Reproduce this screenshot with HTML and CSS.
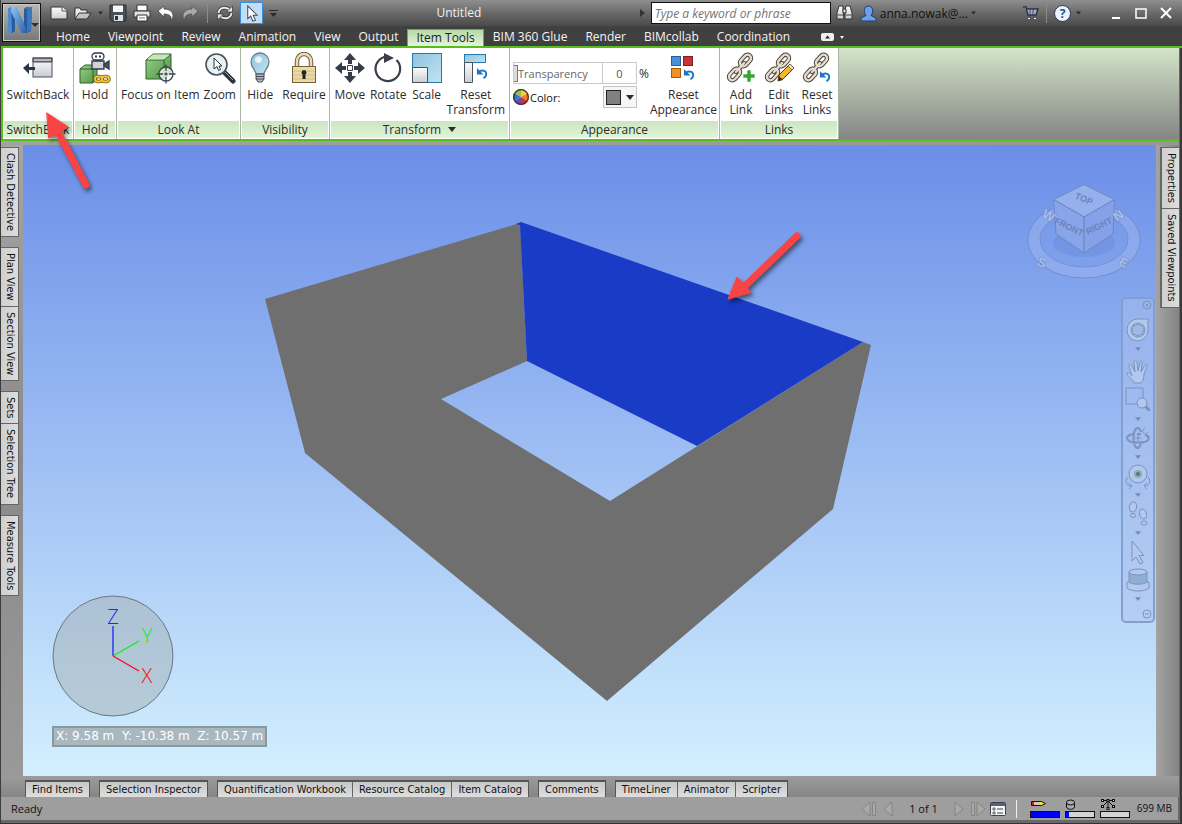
FILE: index.html
```html
<!DOCTYPE html>
<html lang="en">
<head>
<meta charset="utf-8">
<title>Untitled</title>
<link rel="stylesheet" href="styles.css">
</head>
<body>
<svg class="defs" width="0" height="0" aria-hidden="true">
  <defs>
    <linearGradient id="gGreen" x1="0" y1="0" x2="1" y2="1"><stop offset="0" stop-color="#9ccf8c"/><stop offset="1" stop-color="#4d9440"/></linearGradient>
    <linearGradient id="gBlue" x1="0" y1="0" x2="1" y2="1"><stop offset="0" stop-color="#8fc3de"/><stop offset="1" stop-color="#c2e3f2"/></linearGradient>
    <linearGradient id="gSilver" x1="0" y1="0" x2="0" y2="1"><stop offset="0" stop-color="#fdfdfd"/><stop offset="1" stop-color="#c9ccd3"/></linearGradient>
    <linearGradient id="gLogo" x1="0" y1="0" x2="1" y2="1"><stop offset="0" stop-color="#8cc4f0"/><stop offset="1" stop-color="#2c66ad"/></linearGradient>
    <symbol id="caret" viewBox="0 0 8 5"><path d="M0 0h8L4 5z" fill="currentColor"/></symbol>
    <symbol id="chain" viewBox="0 0 32 32">
      <g fill="none" stroke-linecap="round">
        <g stroke="#4a443c" stroke-width="4.400"><rect x="14" y="5" width="13" height="7" rx="3.500" transform="rotate(-48 20.500 8.500)"/><rect x="3" y="19" width="13" height="7" rx="3.500" transform="rotate(-48 9.500 22.500)"/><path d="M11 20l8-9"/></g>
        <g stroke="#e6dccb" stroke-width="2.400"><rect x="14" y="5" width="13" height="7" rx="3.500" transform="rotate(-48 20.500 8.500)"/><rect x="3" y="19" width="13" height="7" rx="3.500" transform="rotate(-48 9.500 22.500)"/><path d="M11 20l8-9"/></g>
      </g>
    </symbol>
    <symbol id="undoBlue" viewBox="0 0 14 14"><path d="M2.500 5.500C6 2.500 11 3.500 11 7.500c0 2-1 3.500-3 4.500" fill="none" stroke="#1b74c8" stroke-width="2"/><path d="M1 1v7h7z" fill="#1b74c8"/></symbol>
    <symbol id="pointer" viewBox="0 0 14 20"><path d="M2 1v15l3.500-3 2.500 6 3-1.200-2.600-5.800H13z" fill="#fff" stroke="#3c4654" stroke-width="1.200"/></symbol>
  </defs>
</svg>

<div class="app">
  <header class="chrome">
    <button class="app-menu" aria-label="Application menu">
      <svg width="38" height="38" viewBox="0 0 38 38"><path d="M5 5l3-2h5l8 17V5l2-2h6l-1 24-4 2h-5l-7-14v12l-3 2H5z" fill="#2a5c9d"/><path d="M8 3h5l10 22v4h-4L8 8z" fill="url(#gLogo)"/><path d="M5 5l3-2 1 24-1 2H5z" fill="#4b8dcb"/><path d="M23 3h6l-1 22-4 4V6z" fill="#3a78bd"/><path d="M28 19h8l-4 4z" fill="#2e2e2e"/></svg>
    </button>
    <div class="titlebar">
      <div class="quick">
        <button class="tool" aria-label="New"><svg width="18" height="16" viewBox="0 0 18 16"><path d="M1 2h11l5 4v8H1z" fill="url(#gSilver)" stroke="#333"/><path d="M12 2v4h5" fill="#fff" stroke="#555"/></svg></button>
        <button class="tool" aria-label="Open"><svg width="18" height="16" viewBox="0 0 18 16"><path d="M1 14V3h5l1 2h6v3" fill="#eee" stroke="#333"/><path d="M1 14l4-6h12l-4 6z" fill="#bfc4ca" stroke="#333"/></svg></button>
        <svg class="tiny" width="5" height="4"><use href="#caret"/></svg>
        <button class="tool" aria-label="Save"><svg width="18" height="18" viewBox="0 0 18 18"><path d="M1 1h16v16H3l-2-2z" fill="#4b5058" stroke="#2b2b2b"/><path d="M4 1.500h10V8H4z" fill="#f7f7f7"/><path d="M5 11h9v6H5z" fill="#dde3ea"/><path d="M6 12h3v4H6z" fill="#333"/></svg></button>
        <button class="tool" aria-label="Print"><svg width="18" height="18" viewBox="0 0 18 18"><path d="M4 1h10v6H4z" fill="#fff" stroke="#333"/><path d="M1 7h16v6H1z" fill="#e4e4e4" stroke="#333"/><path d="M4 11h10v6H4z" fill="#fff" stroke="#333"/><path d="M6 14h6" stroke="#777"/></svg></button>
        <button class="tool" aria-label="Undo"><svg width="18" height="16" viewBox="0 0 18 16"><path d="M1 6l6-5v3c6 0 9 3 9 7 0 2-1 3-2 4 1-4-2-6-7-6v3z" fill="#fff" stroke="#444" stroke-width=".8"/></svg></button>
        <button class="tool" aria-label="Redo"><svg width="18" height="16" viewBox="0 0 18 16"><path d="M17 6l-6-5v3C5 4 2 7 2 11c0 2 1 3 2 4-1-4 2-6 7-6v3z" fill="#a9a9a9" stroke="#555" stroke-width=".8"/></svg></button>
        <span class="rule"></span>
        <button class="tool" aria-label="Refresh"><svg width="18" height="16" viewBox="0 0 18 16"><g fill="none" stroke="#2f2f2f" stroke-width="3.400"><path d="M2.500 8C3 3 9 1 13.500 4.500M15.500 8C15 13 9 15 4.500 11.500"/></g><g fill="none" stroke="#e8e8e8" stroke-width="2"><path d="M2.500 8C3 3 9 1 13.500 4.500M15.500 8C15 13 9 15 4.500 11.500"/></g><path d="M16.500 1v6h-6zM1.500 15V9h6z" fill="#e8e8e8" stroke="#2f2f2f" stroke-width=".7"/></svg></button>
        <button class="tool tool-on" aria-label="Select" aria-pressed="true"><svg width="12" height="17"><use href="#pointer"/></svg></button>
        <svg class="tiny" width="9" height="7" viewBox="0 0 9 7"><path d="M0 0h9v1H0zM1 3h7L4.500 7z" fill="currentColor"/></svg>
      </div>
      <h1 class="doc-title">Untitled</h1>
      <div class="account">
        <svg class="tiny" width="5" height="8"><path d="M0 0l5 4-5 4z" fill="#333"/></svg>
        <input class="search" type="search" placeholder="Type a keyword or phrase" aria-label="Search">
        <button class="tool" aria-label="Find"><svg width="17" height="16" viewBox="0 0 17 16"><g fill="url(#gSilver)" stroke="#333"><path d="M3 1h4v4l1 9H1V8zM10 1h4l2 7v6H9V5z"/><path d="M7 4h3v4H7z"/></g><path d="M1.500 10h6M9.500 10h6" stroke="#444"/></svg></button>
        <button class="user"><svg width="17" height="17" viewBox="0 0 17 17"><path d="M1 16v-3l5-2.500C3 7 4 1 8.500 1S14 7 11 10.500l5 2.500v3z" fill="#6f9fe8" stroke="#1d3d78"/></svg><span>anna.nowak@...</span><svg class="tiny" width="5" height="4"><use href="#caret"/></svg></button>
        <button class="tool cart" aria-label="Store"><svg width="17" height="16" viewBox="0 0 17 16"><path d="M1 2h3l2 8h8l2-6H5" fill="#e8ecf4" stroke="#25304f" stroke-width="1.400"/><path d="M6 6h9M6 8h8M8 4v6M11 4v6" stroke="#25304f" stroke-width=".7"/><circle cx="7" cy="13.500" r="1.500" fill="#fff" stroke="#25304f"/><circle cx="13" cy="13.500" r="1.500" fill="#fff" stroke="#25304f"/></svg></button>
        <span class="rule"></span>
        <button class="help" aria-label="Help">?</button>
        <svg class="tiny" width="5" height="4"><use href="#caret"/></svg>
        <div class="window-buttons">
          <button aria-label="Minimize"><svg width="14" height="14"><path d="M3 11h8v2H3z" fill="#fff"/></svg></button>
          <button aria-label="Maximize"><svg width="14" height="14"><path d="M2 3h10v9H2z" fill="none" stroke="#fff" stroke-width="1.500"/></svg></button>
          <button aria-label="Close"><svg width="14" height="14"><path d="M2 2l10 10M12 2L2 12" stroke="#fff" stroke-width="2"/></svg></button>
        </div>
      </div>
    </div>
    <nav class="tabs" aria-label="Ribbon tabs">
      <button>Home</button><button>Viewpoint</button><button>Review</button><button>Animation</button><button>View</button><button>Output</button><button class="active">Item Tools</button><button>BIM 360 Glue</button><button>Render</button><button>BIMcollab</button><button>Coordination</button>
      <button class="minimize" aria-label="Minimize ribbon"><svg width="24" height="8" viewBox="0 0 24 8"><rect width="13" height="8" rx="2" fill="#eee"/><path d="M4 5.500h5L6.500 2.500z" fill="#222"/><path d="M19 3h4l-2 3z" fill="#eee"/></svg></button>
    </nav>
  </header>

  <section class="ribbon" aria-label="Item Tools">
    <div class="panel w-switch">
      <div class="cmds"><button class="cmd"><svg width="32" height="32" viewBox="0 0 32 32"><rect x="11" y="6" width="19" height="19" fill="url(#gSilver)" stroke="#4a4f5a"/><path d="M11 6h19v4H11z" fill="#70747e" stroke="#4a4f5a"/><path d="M12 8h17" stroke="#fff"/><path d="M1 16l6-5v4h6v3H7v4z" fill="#2b3444"/></svg><span>SwitchBack</span></button></div>
      <h2>SwitchBack</h2>
    </div>
    <div class="panel w-hold">
      <div class="cmds"><button class="cmd"><svg width="32" height="32" viewBox="0 0 32 32"><path d="M1 17l5-4h12v14l-4 4H1z" fill="url(#gGreen)" stroke="#2c6327"/><path d="M1 17h13v14M14 17l4-4" fill="none" stroke="#2c6327"/><g fill="#fff" stroke="#2f3847" stroke-width="1.300"><rect x="13" y="1" width="12" height="7" rx="3.500"/><path d="M13 9h12v8H13z" fill="#cfd3db"/><path d="M25 12l5-3v8l-5-3z" fill="#4a5260"/></g><path d="M16 4.500h2M20 4.500h2" stroke="#2f3847" stroke-width="2"/><g fill="none" stroke="#7b5a08" stroke-width="3.500"><rect x="16" y="24.500" width="7" height="5" rx="2.500"/><rect x="23" y="24.500" width="7" height="5" rx="2.500"/></g><g fill="none" stroke="#f4c33a" stroke-width="1.800"><rect x="16" y="24.500" width="7" height="5" rx="2.500"/><rect x="23" y="24.500" width="7" height="5" rx="2.500"/></g></svg><span>Hold</span></button></div>
      <h2>Hold</h2>
    </div>
    <div class="panel w-look">
      <div class="cmds">
        <button class="cmd"><svg width="32" height="32" viewBox="0 0 32 32"><path d="M2 8l7-6h18v19l-7 6H2z" fill="url(#gGreen)" stroke="#2c6327"/><path d="M2 8h18v19M20 8l7-6" fill="none" stroke="#2c6327"/><path d="M3 7.500l6-5h17l-6 5z" fill="#c8e5bd"/><circle cx="22" cy="22" r="7" fill="#fff" fill-opacity=".75" stroke="#3c4452" stroke-width="1.300"/><path d="M22 12.500V19M22 25v6.500M12.500 22H19M25 22h6.500M20.500 22h3M22 20.500v3" stroke="#3c4452" stroke-width="1.300"/></svg><span>Focus on Item</span></button>
        <button class="cmd"><svg width="32" height="32" viewBox="0 0 32 32"><path d="M20 20l9 9" stroke="#30343c" stroke-width="5" stroke-linecap="round"/><path d="M21 20l8 8" stroke="#9aa0ab"/><circle cx="12.500" cy="12.500" r="10.500" fill="#e7f2f6" stroke="#4a525e" stroke-width="1.600"/><path d="M10 6v11l3-2.500 1.600 4 2-1-1.700-3.500H18z" fill="#fff" stroke="#333"/></svg><span>Zoom</span></button>
      </div>
      <h2>Look At</h2>
    </div>
    <div class="panel w-vis">
      <div class="cmds">
        <button class="cmd"><svg width="32" height="32" viewBox="0 0 32 32"><path d="M12 22c0-4-5-6-5-12a9 9 0 0118 0c0 6-5 8-5 12z" fill="url(#gBlue)" stroke="#66808d" stroke-width="1.300"/><path d="M12 5c3-2 6 0 6 3s-4 4-6 2-1-4 0-5z" fill="#fff" fill-opacity=".75"/><path d="M12 22h8v5l-2 3h-4l-2-3z" fill="#b5b9bf" stroke="#464b54"/><path d="M12 24.500h8M12 27h8" stroke="#464b54"/></svg><span>Hide</span></button>
        <button class="cmd"><svg width="32" height="32" viewBox="0 0 32 32"><path d="M9 16V9a7 7 0 0114 0v7" fill="none" stroke="#6d5c35" stroke-width="4.500"/><path d="M9 16V9a7 7 0 0114 0v7" fill="none" stroke="#e9dcb8" stroke-width="2.500"/><rect x="4.500" y="14.500" width="23" height="16" fill="#ead9a9" stroke="#75623a"/><path d="M5 19h22M5 23h22M5 27h22" stroke="#d4bd82"/><path d="M16 18a2.500 2.500 0 011.500 4.500V27h-3v-4.500A2.500 2.500 0 0116 18z" fill="#29251c"/></svg><span>Require</span></button>
      </div>
      <h2>Visibility</h2>
    </div>
    <div class="panel w-trans">
      <div class="cmds">
        <button class="cmd"><svg width="32" height="32" viewBox="0 0 32 32"><path d="M16 1l6 7h-4v4h-4V8h-4zM16 31l6-7h-4v-4h-4v4h-4zM1 16l7-6v4h4v4H8v4zM31 16l-7-6v4h-4v4h4v4z" fill="#363c48"/><path d="M13.500 13.500h5v5h-5z" fill="#fff" stroke="#363c48"/></svg><span>Move</span></button>
        <button class="cmd"><svg width="32" height="32" viewBox="0 0 32 32"><path d="M24.500 8a12.300 12.300 0 11-9.500-3.500" fill="none" stroke="#3b3f49" stroke-width="2.200"/><path d="M12 1l10 5-10 5z" fill="#3b3f49"/></svg><span>Rotate</span></button>
        <button class="cmd"><svg width="32" height="32" viewBox="0 0 32 32"><rect x="1.500" y="1.500" width="29" height="29" fill="url(#gBlue)" stroke="#2678ad"/><path d="M1.500 15.500h15v15h-15z" fill="url(#gSilver)" stroke="#4d5058"/></svg><span>Scale</span></button>
        <button class="cmd"><svg width="32" height="32" viewBox="0 0 32 32"><rect x="4.500" y="2.500" width="21" height="8" fill="url(#gBlue)" stroke="#2678ad"/><path d="M4.500 10.500h8v20h-8z" fill="url(#gSilver)" stroke="#4d5058"/><use href="#undoBlue" x="16" y="15" width="13" height="13"/></svg><span>Reset<br>Transform</span></button>
      </div>
      <h2>Transform <svg width="8" height="5"><use href="#caret"/></svg></h2>
    </div>
    <div class="panel w-app">
      <div class="cmds cmds-tight">
        <div class="look-form">
          <div class="slider"><label for="transparency">Transparency</label><input id="transparency" type="range" value="0"></div>
          <input class="amount" type="text" value="0" aria-label="Transparency percent"><span class="unit">%</span>
          <div class="color-label"><svg width="16" height="16" viewBox="0 0 16 16"><path d="M8 8L1 4a8 8 0 017-4z" fill="#9ac43c"/><path d="M8 8V0a8 8 0 017 4z" fill="#f3d13e"/><path d="M8 8l7-4a8 8 0 010 8z" fill="#ec7f2c"/><path d="M8 8l7 4a8 8 0 01-7 4z" fill="#d0343a"/><path d="M8 8v8a8 8 0 01-7-4z" fill="#6b48b4"/><path d="M8 8l-7 4a8 8 0 010-8z" fill="#3478cc"/><circle cx="8" cy="8" r="7.300" fill="none" stroke="#2e3036" stroke-width="1.200"/></svg><span id="color-name">Color:</span></div>
          <button class="swatch" aria-labelledby="color-name"><i></i><svg width="8" height="5"><use href="#caret"/></svg></button>
        </div>
        <button class="cmd"><svg width="32" height="32" viewBox="0 0 32 32"><rect x="4.500" y="4.500" width="9" height="9" fill="#4b8fd9" stroke="#2a5c96"/><rect x="16.500" y="4.500" width="9" height="9" fill="#c9313b" stroke="#831d24"/><rect x="4.500" y="16.500" width="9" height="9" fill="#f39125" stroke="#a65910"/><use href="#undoBlue" x="16" y="16" width="13" height="13"/></svg><span>Reset<br>Appearance</span></button>
      </div>
      <h2>Appearance</h2>
    </div>
    <div class="panel w-links">
      <div class="cmds">
        <button class="cmd"><svg width="32" height="32" viewBox="0 0 32 32"><use href="#chain"/><path d="M22 18h4v4h4v4h-4v4h-4v-4h-4v-4h4z" fill="#34a72b" stroke="#fff" stroke-width=".6"/></svg><span>Add<br>Link</span></button>
        <button class="cmd"><svg width="32" height="32" viewBox="0 0 32 32"><use href="#chain"/><path d="M15 29l1-6 11-11 4 4-11 11z" fill="#f7b52c" stroke="#573a0c"/><path d="M15 29l1-5 4 4z" fill="#3a2a17"/><path d="M27 12l4 4-2 2-4-4z" fill="#e9e0d2" stroke="#573a0c" stroke-width=".6"/></svg><span>Edit<br>Links</span></button>
        <button class="cmd"><svg width="32" height="32" viewBox="0 0 32 32"><use href="#chain"/><use href="#undoBlue" x="18" y="18" width="13" height="13"/></svg><span>Reset<br>Links</span></button>
      </div>
      <h2>Links</h2>
    </div>
  </section>

  <div class="workspace">
    <aside class="dock left" aria-label="Left panels">
      <div class="dock-group"><button>Clash Detective</button></div>
      <div class="dock-group"><button>Plan View</button><button>Section View</button></div>
      <div class="dock-group"><button>Sets</button><button>Selection Tree</button></div>
      <div class="dock-group"><button>Measure Tools</button></div>
    </aside>

    <main class="viewport">
      <svg class="scene" viewBox="23 145 1133 631" role="img" aria-label="3D model of four walls">
        <path d="M265 299L520 223L527 361L441 399L610 501L863 342L871 345L833 509L607 701L305 453z" fill="#6f6f6f"/>
        <path d="M516 224L521 222L863 342L697 446L527 361L520 225z" fill="#1a3bc6"/>
      </svg>

      <svg class="viewcube" width="120" height="104" viewBox="1024 180 120 104">
        <path d="M1028 240a56 38 0 00112 0a56 38 0 00-112 0zM1040 239a44 28 0 0188 0a44 28 0 01-88 0z" fill="#9db5ee" fill-opacity=".5" stroke="#6c88c8" stroke-opacity=".7" fill-rule="evenodd"/>
        <ellipse cx="1084" cy="243" rx="31" ry="14" fill="#4d6ebd" fill-opacity=".18"/>
        <g stroke="#6f87bd" stroke-linejoin="round"><path d="M1084 184.500l30.500 15L1084 217l-30.500-17.500z" fill="#96b0ee"/><path d="M1053.500 199.500L1084 217v36l-28-19z" fill="#88a5ea"/><path d="M1114.500 199.500L1084 217v36l29-19z" fill="#85a2e9"/></g>
        <g class="cube-text"><text x="1084" y="202" transform="rotate(22 1084 199)">TOP</text><text x="1069" y="230" transform="rotate(26 1069 227)">FRONT</text><text x="1099" y="229" transform="rotate(-26 1099 226)">RIGHT</text></g>
        <g class="compass"><text x="1049" y="220" transform="rotate(28 1049 215)">W</text><text x="1118" y="220" transform="rotate(-35 1118 215)">N</text><text x="1042" y="267" transform="rotate(25 1042 262)">S</text><text x="1124" y="267" transform="rotate(28 1124 262)">E</text></g>
      </svg>

      <div class="navbar" role="toolbar" aria-label="Navigation">
        <button class="nav-end" aria-label="Close"><svg width="10" height="10" viewBox="0 0 10 10"><circle cx="5" cy="5" r="4" /><path d="M3.500 3.500l3 3M6.500 3.500l-3 3"/></svg></button>
        <button class="wheel" aria-label="Steering wheels"><svg width="28" height="28" viewBox="0 0 28 28"><path d="M14 3h10v11a10.500 11 0 11-10-11z" class="pale"/><circle cx="14" cy="14" r="7"/><path d="M17 9.500h2v2l1 2.500-1 2.500v2h-2L14 20l-3-1.500H9v-2L8 14l1-2.500v-2h2L14 8z" fill="#9fb8e6"/></svg><svg class="nav-caret"><use href="#caret"/></svg></button>
        <button aria-label="Pan"><svg width="28" height="28" viewBox="0 0 28 28"><path d="M10 25c-1-4-7-7-7-10 2-1 4 1 5 3L5 8c0-2 2-2 3 0l3 6-1-10c0-2 3-2 3 0l1 9 2-9c0-2 3-2 2 1l-1 9 4-7c1-2 3-1 2 1l-3 8c0 4-1 7-3 9z" class="pale"/></svg></button>
        <button aria-label="Zoom window"><svg width="28" height="28" viewBox="0 0 28 28"><path d="M2 2h17v16H2z"/><circle cx="18" cy="17" r="5" class="pale"/><path d="M21.500 20.500l4 4" stroke-width="3"/></svg><svg class="nav-caret"><use href="#caret"/></svg></button>
        <button aria-label="Orbit"><svg width="28" height="28" viewBox="0 0 28 28"><path d="M9 10c-4 1-6 2-6 4 0 3 5 4.500 11 4.500S25 17 25 14c0-1-1-2-3-3M13 10h4M17 8C16 5 15 4 13.500 4 11 4 9.500 9 9.500 14s1.500 10 4 10c2 0 3-3 3.500-6" stroke-width="2"/><path d="M11 14h6M14 11v6M21 4l-3 3 3 3M24 8l-3 3 3 3"/></svg><svg class="nav-caret"><use href="#caret"/></svg></button>
        <button aria-label="Look"><svg width="28" height="28" viewBox="0 0 28 28"><path d="M4 15c-4 5-1 9 4 9M24 15c4 5 1 9-4 9M5 21l3 3-3 3M23 21l-3 3 3 3"/><circle cx="14" cy="12" r="9" class="pale"/><circle cx="14" cy="12" r="4" fill="#87b3ac" stroke="none"/><circle cx="14" cy="12" r="2" fill="#54758c" stroke="none"/></svg><svg class="nav-caret"><use href="#caret"/></svg></button>
        <button aria-label="Walk"><svg width="28" height="28" viewBox="0 0 28 28"><g class="pale"><ellipse cx="9" cy="7" rx="3.500" ry="5" transform="rotate(10 9 7)"/><ellipse cx="9" cy="15.500" rx="2.500" ry="2"/><ellipse cx="19" cy="14" rx="3.500" ry="5" transform="rotate(-18 19 14)"/><ellipse cx="20" cy="23" rx="3" ry="2"/></g></svg><svg class="nav-caret"><use href="#caret"/></svg></button>
        <button aria-label="Select"><svg width="28" height="28" viewBox="0 0 28 28"><path d="M8 3v20l4-4 4 7 3-1.500-4-7h5z" class="pale"/></svg></button>
        <button aria-label="Shading"><svg width="28" height="28" viewBox="0 0 28 28"><path d="M3 16v6c4 4 18 4 22 0v-6z" class="pale"/><path d="M5 6v10c3 3 15 3 18 0V6z" fill="#8fadd2"/><ellipse cx="14" cy="6" rx="9" ry="3" class="pale"/></svg><svg class="nav-caret"><use href="#caret"/></svg></button>
        <button class="nav-end" aria-label="Customize"><svg width="10" height="10" viewBox="0 0 10 10"><circle cx="5" cy="5" r="4"/><path d="M3 5h4"/></svg></button>
      </div>

      <div class="hud">
        <svg class="axes" width="122" height="122" viewBox="52 595 122 122"><circle cx="113" cy="656" r="60" fill="#a3adaf" fill-opacity=".48" stroke="#6d767c"/><path d="M113 656v-30" stroke="#2d38f2" stroke-width="1.500"/><path d="M113 656l26-15" stroke="#0cf01a" stroke-width="1.300"/><path d="M113 656l26 15" stroke="#f20d0d" stroke-width="1.300"/><text x="113" y="624" fill="#2424f5">Z</text><text x="147" y="643" fill="#0cf01a">Y</text><text x="147" y="683" fill="#f20d0d">X</text></svg>
        <output class="coords">X: 9.58 m  Y: -10.38 m  Z: 10.57 m</output>
      </div>
    </main>

    <aside class="dock right" aria-label="Right panels">
      <div class="dock-group"><button>Properties</button><button>Saved Viewpoints</button></div>
    </aside>
  </div>

  <div class="bottom-dock">
    <div class="dock-row"><button>Find Items</button></div>
    <div class="dock-row"><button>Selection Inspector</button></div>
    <div class="dock-row"><button>Quantification Workbook</button><button>Resource Catalog</button><button>Item Catalog</button></div>
    <div class="dock-row"><button>Comments</button></div>
    <div class="dock-row"><button>TimeLiner</button><button>Animator</button><button>Scripter</button></div>
  </div>

  <footer class="status">
    <span class="ready">Ready</span>
    <div class="pager">
      <button aria-label="First sheet" disabled><svg width="16" height="16" viewBox="0 0 16 16"><path d="M9 1v14L1 8zM11.500 1.500h3v13h-3z"/></svg></button>
      <button aria-label="Previous sheet" disabled><svg width="10" height="16" viewBox="0 0 10 16"><path d="M9 1v14L1 8z"/></svg></button>
      <span>1 of 1</span>
      <button aria-label="Next sheet" disabled><svg width="10" height="16" viewBox="0 0 10 16"><path d="M1 1v14l8-7z"/></svg></button>
      <button aria-label="Last sheet" disabled><svg width="16" height="16" viewBox="0 0 16 16"><path d="M7 1v14l8-7zM1.500 1.500h3v13h-3z"/></svg></button>
    </div>
    <button class="sheets" aria-label="Sheet browser"><svg width="16" height="16" viewBox="0 0 16 16"><rect x=".5" y="1.500" width="15" height="13" rx="1" fill="#f5f5f5" stroke="#3c4250"/><path d="M1 2h14v3H1z" fill="#59616f"/><path d="M3 7h2v2H3zM3 11h2v2H3z" fill="none" stroke="#3c4250" stroke-width=".8"/><path d="M7 8h6M7 12h6" stroke="#3c4250"/></svg></button>
    <span class="divider"></span>
    <div class="meters">
      <div class="meter"><svg width="30" height="12"><path d="M1.500 2.500h10l4 2-4 2h-10z" fill="#ece52c" stroke="#111"/><path d="M2 3h2v3H2z" fill="#e01212"/><path d="M4 3h6v3H4z" fill="#d9c9a0"/></svg><span class="bar"><i style="width:100%"></i></span></div>
      <div class="meter"><svg width="30" height="12"><g fill="#aaa" stroke="#111"><path d="M1.500 3v5c1 3 7 3 8 0V3"/><ellipse cx="5.500" cy="3.500" rx="4" ry="2.500"/></g></svg><span class="bar"><i style="width:11%"></i></span></div>
      <div class="meter"><svg width="30" height="12"><path d="M2 1.500h12M8 2v7M7 3L3 7M9 3l4 4" stroke="#111" fill="none"/><path d="M1 0h3v3H1zM6.500 0h3v3h-3zM12 0h3v3h-3zM1 6h3v3H1zM6.500 8h3v3h-3zM12 6h3v3h-3z" fill="#111"/><path d="M2 1h1v1H2zM7.500 1h1v1h-1zM13 1h1v1h-1zM2 7h1v1H2zM7.500 9h1v1h-1zM13 7h1v1h-1z" fill="#ccc"/></svg><span class="bar"><i style="width:0%"></i></span></div>
    </div>
    <span class="memory">699 MB</span>
  </footer>

  <svg class="callouts" width="820" height="320" aria-hidden="true">
    <g class="callout"><path d="M86 185L59 134" stroke-width="7"/><path d="M47 113l21 14-19 11z"/></g>
    <g class="callout"><path d="M797 236L745 286" stroke-width="7"/><path d="M728 299l9-22 14 15z"/></g>
  </svg>
</div>
</body>
</html>
```
FILE: styles.css
```css
* { box-sizing: border-box; }
body { margin: 0; font: 12px/15px "Open Sans", "Noto Sans", sans-serif; color: #2c2c2c; }
button, input { font: inherit; color: inherit; }
button { margin: 0; padding: 0; border: 0; background: none; }
button svg, .tiny { display: block; flex: none; }
h1, h2 { margin: 0; font: inherit; }
.defs { position: absolute; }

.app {
  position: relative;
  display: flex;
  flex-direction: column;
  min-height: 100vh;
  padding: 0 4px 3px 1px;
  background: linear-gradient(90deg, #3c3c3c 0 1px, #696969 1px calc(100% - 2px), #3a3a3a calc(100% - 2px));
  border-bottom: 1px solid #333;
}

/* Title bar and tab strip */
.chrome { position: relative; margin-right: -4px; background: #404040; }
.app-menu {
  position: absolute; left: 1px; top: 3px; z-index: 2;
  width: 39px; height: 39px;
  border: 1px solid #111;
  background: linear-gradient(#b8b8b8, #777);
  box-shadow: inset 0 0 0 1px #ccc;
}
.titlebar {
  display: flex; align-items: center;
  height: 26px; padding: 0 9px 0 49px;
  background: linear-gradient(#8f8f8f, #666 55%, #4a4a4a);
}
.quick, .account, .user, .window-buttons { display: flex; align-items: center; }
.quick { gap: 6px; }
.tiny { color: #2b2b2b; }
.tool-on { display: grid; place-items: center; width: 23px; height: 22px; background: #c3ddf7; border: 1px solid #3b8de0; }
.rule { width: 1px; height: 20px; background: #8d8d8d; margin: 0 2px; }
.doc-title { flex: 1; padding-bottom: 2px; text-align: center; color: #f0f0f0; }
.account { gap: 5px; }
.search {
  width: 180px; height: 22px; margin-left: 1px; padding: 0 3px;
  border: 1px solid #111; border-radius: 0; background: #fff; font-style: italic; outline: 0; appearance: none;
}
.search::placeholder { color: #757575; }
.user { gap: 3px; color: #111; margin-left: 2px; }
.cart { margin-left: 41px; }
.help {
  width: 17px; height: 17px; border-radius: 50%; border: 1px solid #24365c;
  background: #eef3fa; color: #1b4fa3; font-weight: 700; line-height: 15px;
}
.window-buttons { gap: 11px; margin-left: 23px; }
.tabs { display: flex; height: 22px; padding: 3px 0 0 46px; color: #f4f4f4; border-bottom: 2px solid #55bf1c; }
.tabs button { padding: 0 9px 2px; }
.tabs .active {
  padding: 0 8px 2px; border: 1px solid #55bf1c; border-bottom: 0;
  background: linear-gradient(#b5d9a6, #e4f5dc); color: #222;
}
.tabs .minimize { padding: 0 0 2px 22px; }

/* Ribbon */
.ribbon {
  display: flex; height: 93px;
  border: solid #55bf1c; border-width: 0 0 2px 2px; margin-right: -1px;
  background: linear-gradient(#d3e4c9, #858585);
}
.panel { display: flex; flex-direction: column; background: #fff; border-right: 1px solid #a9b8a4; }
.w-switch { width: 71px; } .w-hold { width: 43px; } .w-look { width: 124px; }
.w-vis { width: 89px; } .w-trans { width: 180px; } .w-app { width: 210px; } .w-links { width: 119px; }
.cmds { flex: 1; display: flex; justify-content: center; gap: 6px; padding-top: 4px; }
.w-look .cmds, .w-trans .cmds { gap: 4px; }
.cmds-tight { gap: 0; }
.cmd { display: flex; flex-direction: column; align-items: center; justify-content: flex-start; gap: 3px; white-space: nowrap; }
.w-links .cmd { width: 32px; }
.panel h2 {
  height: 17px; margin: 0 1px 1px; line-height: 18px; text-align: center;
  background: linear-gradient(#cce4c2, #e0f6d7);
}
.panel h2 svg { margin: 0 0 2px 4px; }
.look-form {
  display: grid; grid-template-columns: 90px 34px 1fr; grid-template-rows: 22px 22px; gap: 2px 0;
  align-content: start; align-items: center; padding-top: 10px; flex: 1; margin-left: 3px;
}
.look-form + .cmd { margin-right: 2px; }
.slider { display: grid; height: 22px; border: 1px solid #c9c9c9; align-items: center; }
.slider > * { grid-area: 1 / 1; }
.slider label { padding-left: 4px; color: #666; font-size: 11px; }
.slider input { appearance: none; width: 100%; height: 20px; margin: 0; background: none; }
.slider input::-webkit-slider-thumb { appearance: none; width: 4px; height: 17px; border: 1px solid #777; border-left: 0; background: #ddd; }
.amount { width: 100%; height: 22px; border: 1px solid #c9c9c9; border-left: 0; text-align: center; padding: 0; color: #555; font-size: 11px; }
.unit { padding-left: 2px; }
.color-label { display: flex; align-items: center; gap: 1px; color: #111; font-size: 11px; }
.color-label svg { flex: none; }
.swatch { display: flex; align-items: center; justify-content: space-around; height: 22px; border: 1px solid #c4c4c4; background: #f6f6f6; }
.swatch i { width: 15px; height: 15px; border: 1px solid #222; background: #808080; }

/* Model area */
.workspace { flex: 1; display: flex; background: linear-gradient(90deg, #a3a3a3, #969696); padding-top: 4px; margin-right: -1px; }
.dock { display: flex; flex-direction: column; gap: 10px; padding-top: 2px; font: 11px/14px "DejaVu Sans Condensed", "DejaVu Sans", sans-serif; }
.left { width: 22px; padding-right: 4px; background: linear-gradient(#a5a5a5, #8a8a8a 50%, #999); }
.right { width: 23px; padding-left: 4px; background: linear-gradient(90deg, #a3a3a3, #858585); }
.dock-group { display: flex; flex-direction: column; border: solid #666; border-width: 1px 1px 1px 0; }
.right .dock-group { border-width: 1px 0 1px 2px; }
.dock button { writing-mode: vertical-rl; padding: 5px 1px; background: linear-gradient(90deg, #cfcfcf, #ddd); color: #111; }
.dock button + button { border-top: 1px solid #666; }
.viewport { position: relative; flex: 1; min-height: 400px; overflow: hidden; background: linear-gradient(#6b8ee8, #d2f0ff); }
.scene { position: absolute; inset: 0; width: 100%; height: 100%; }
.viewcube { position: absolute; right: 12px; top: 35px; }
.cube-text { font: 700 9px "Liberation Sans", sans-serif; fill: #6b83bb; text-anchor: middle; }
.compass { font: 700 13px "Liberation Sans", sans-serif; fill: #a9bdef; stroke: #7189c0; stroke-width: 1; paint-order: stroke; text-anchor: middle; }
.navbar {
  position: absolute; right: 1px; top: 152px;
  display: flex; flex-direction: column; align-items: center;
  width: 34px; padding: 1px 0 2px;
  border: 2px solid #839fd0; border-radius: 5px; background: rgb(173 194 236 / 45%);
}
.navbar svg { fill: none; stroke: #7c93bb; stroke-width: 1; }
.navbar .pale { fill: #b3c8ef; }
.navbar .wheel { margin-bottom: 4px; }
.navbar .nav-caret { width: 6px; height: 4px; margin: 3px auto; color: #748cb4; stroke: none; }
.nav-end { align-self: flex-end; padding: 0 1px 6px 0; }
.nav-end:last-child { padding: 5px 1px 0 0; }
.hud { position: absolute; left: 29px; bottom: 29px; display: flex; flex-direction: column; align-items: flex-start; gap: 9px; }
.axes text { font: 300 20px "Open Sans", sans-serif; text-anchor: middle; }
.coords { padding: 0 2px; border: 2px solid #8b989e; background: #a9b8bf; color: #fff; font: 12px/17px "DejaVu Sans", sans-serif; white-space: pre; }

/* Bottom tabs and status */
.bottom-dock {
  display: flex; gap: 9px; padding: 4px 0 0 24px; height: 21px; margin-right: -1px;
  background: linear-gradient(#9c9c9c, #858585); font: 11px/15px "DejaVu Sans Condensed", "DejaVu Sans", sans-serif;
}
.dock-row { display: flex; border: solid #555; border-width: 2px 1px 0; white-space: nowrap; }
.dock-row button { padding: 0 6px; background: linear-gradient(#c8c8c8, #dedede); color: #111; }
.dock-row button + button { border-left: 1px solid #666; }
.status { display: flex; align-items: center; height: 23px; padding: 0 6px 0 10px; background: #9e9e9e; color: #111; font-size: 11px; }
.ready { margin-right: auto; }
.pager { display: flex; align-items: center; gap: 6px; }
.pager span { padding: 0 10px; }
.pager svg { fill: #a9a9a9; stroke: #858585; }
.sheets { margin-left: 4px; }
.divider { width: 1px; height: 18px; margin: 0 13px 0 10px; background: #f0f0f0; }
.meters { display: flex; gap: 5px; }
.meter { display: flex; flex-direction: column; width: 30px; }
.meter svg { display: block; }
.bar { height: 7px; border: 1px solid #111; background: #d4d4d4; }
.bar i { display: block; height: 100%; background: #00f; }
.memory { margin-left: 7px; font-size: 10px; }

.callouts { position: absolute; left: 0; top: 0; z-index: 5; pointer-events: none; }
.callout { fill: #f94445; stroke: #f94445; stroke-width: 1; stroke-linecap: round; stroke-linejoin: round; filter: drop-shadow(2px 3px 2px rgb(0 0 0 / 50%)); }
```
